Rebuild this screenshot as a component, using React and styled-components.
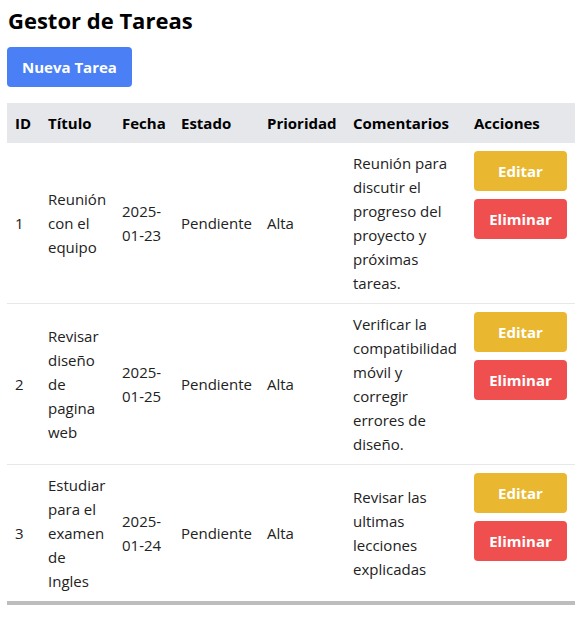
import React from 'react'
import styled, { createGlobalStyle } from 'styled-components';

const GlobalStyle = createGlobalStyle`
  body {
    margin: 0;
    background: #fff;
    font-family: "Open Sans", "Noto Sans", sans-serif;
    color: #222;
  }
`

const Page = styled.div`
  padding: 4px 3px 0 7px;
`

const Title = styled.h1`
  margin: 0 0 11px 1px;
  font-size: 22px;
  line-height: 32px;
  font-weight: 700;
  color: #000;
`

const Button = styled.button`
  display: block;
  border: none;
  border-radius: 4px;
  padding: 8px ${p => (p.$full ? '0' : '15px')};
  font-family: inherit;
  font-size: 15px;
  font-weight: 700;
  line-height: 24px;
  color: #fff;
  background: ${p => p.$bg};
  width: ${p => (p.$full ? '100%' : 'auto')};
  cursor: pointer;
`

const Table = styled.table`
  margin-top: 16px;
  width: 568px;
  border-collapse: collapse;
  table-layout: fixed;
  border-bottom: 4px solid #bdbdbd;
  font-size: 15px;
  line-height: 24px;
`

const Th = styled.th`
  box-sizing: border-box;
  background: #e5e7eb;
  padding: 8px;
  text-align: left;
  font-weight: 700;
  color: #000;
  width: ${p => p.$w}px;
`

const Tr = styled.tr`
  border-top: ${p => (p.$first ? 'none' : '1px solid #e8e8e8')};
`

const Td = styled.td`
  padding: 8px;
  vertical-align: middle;
  color: #222;
`

const ActionsCell = styled.td`
  padding: 8px;
  vertical-align: top;
`

const Actions = styled.div`
  display: flex;
  flex-direction: column;
  gap: 8px;
`

const columns = [
  ['ID', 33],
  ['Título', 74],
  ['Fecha', 59],
  ['Estado', 86],
  ['Prioridad', 86],
  ['Comentarios', 121],
  ['Acciones', 109],
]

const tasks = [
  { id: 1, titulo: 'Reunión con el equipo', fecha: '2025-01-23', estado: 'Pendiente', prioridad: 'Alta', comentarios: 'Reunión para discutir el progreso del proyecto y próximas tareas.' },
  { id: 2, titulo: 'Revisar diseño de pagina web', fecha: '2025-01-25', estado: 'Pendiente', prioridad: 'Alta', comentarios: 'Verificar la compatibilidad móvil y corregir errores de diseño.' },
  { id: 3, titulo: 'Estudiar para el examen de Ingles', fecha: '2025-01-24', estado: 'Pendiente', prioridad: 'Alta', comentarios: 'Revisar las ultimas lecciones explicadas' },
]

const App = () => {
  return (
    <Page>
      <GlobalStyle />
      <Title>Gestor de Tareas</Title>
      <Button $bg="#4a7ff5">Nueva Tarea</Button>
      <Table>
        <thead>
          <tr>
            {columns.map(([name, w]) => <Th key={name} $w={w}>{name}</Th>)}
          </tr>
        </thead>
        <tbody>
          {tasks.map((t, i) => (
            <Tr key={t.id} $first={i === 0}>
              <Td>{t.id}</Td>
              <Td>{t.titulo}</Td>
              <Td>{t.fecha.slice(0, 5)}<br />{t.fecha.slice(5)}</Td>
              <Td>{t.estado}</Td>
              <Td>{t.prioridad}</Td>
              <Td>{t.comentarios}</Td>
              <ActionsCell>
                <Actions>
                  <Button $bg="#e9b730" $full>Editar</Button>
                  <Button $bg="#f04f4f" $full>Eliminar</Button>
                </Actions>
              </ActionsCell>
            </Tr>
          ))}
        </tbody>
      </Table>
    </Page>
  )
}

export default App;
